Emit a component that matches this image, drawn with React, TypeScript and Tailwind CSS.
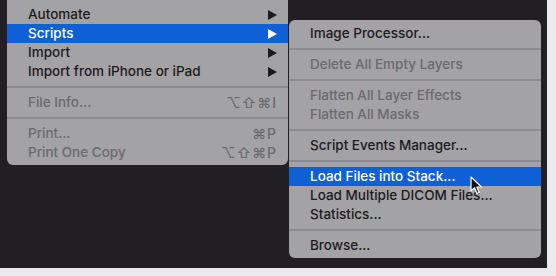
import React from 'react';

type Item =
  | { kind: 'sep' }
  | { kind: 'item'; label: string; shortcut?: string; disabled?: boolean; active?: boolean; sub?: boolean };

const mainItems: Item[] = [
  { kind: 'item', label: 'Automate', sub: true },
  { kind: 'item', label: 'Scripts', sub: true, active: true },
  { kind: 'item', label: 'Import', sub: true },
  { kind: 'item', label: 'Import from iPhone or iPad', sub: true },
  { kind: 'sep' },
  { kind: 'item', label: 'File Info...', shortcut: '⌥⇧⌘I', disabled: true },
  { kind: 'sep' },
  { kind: 'item', label: 'Print...', shortcut: '⌘P', disabled: true },
  { kind: 'item', label: 'Print One Copy', shortcut: '⌥⇧⌘P', disabled: true },
];

const scriptItems: Item[] = [
  { kind: 'item', label: 'Image Processor...' },
  { kind: 'sep' },
  { kind: 'item', label: 'Delete All Empty Layers', disabled: true },
  { kind: 'sep' },
  { kind: 'item', label: 'Flatten All Layer Effects', disabled: true },
  { kind: 'item', label: 'Flatten All Masks', disabled: true },
  { kind: 'sep' },
  { kind: 'item', label: 'Script Events Manager...' },
  { kind: 'sep' },
  { kind: 'item', label: 'Load Files into Stack...', active: true },
  { kind: 'item', label: 'Load Multiple DICOM Files...' },
  { kind: 'item', label: 'Statistics...' },
  { kind: 'sep' },
  { kind: 'item', label: 'Browse...' },
];

const Arrow = ({ white }: { white?: boolean }) => (
  <svg width="9" height="10" viewBox="0 0 9 10" className="shrink-0">
    <polygon points="0,0 9,5 0,10" fill={white ? '#ffffff' : '#1c1b1e'} />
  </svg>
);

const MenuRows = ({ items }: { items: Item[] }) => (
  <>
    {items.map((it, i) =>
      it.kind === 'sep' ? (
        <div key={i} className="h-[12px] flex items-center">
          <div className="h-[2px] w-full bg-[#8c8b8e]" />
        </div>
      ) : (
        <div
          key={i}
          className={`h-[19px] flex items-center justify-between pl-[21px] pr-[11px] ${
            it.active ? 'bg-[#0f5fd7] text-white' : it.disabled ? 'text-[#6b6a6e]' : 'text-[#1c1b1e]'
          }`}
        >
          <span>{it.label}</span>
          {it.sub && <Arrow white={it.active} />}
          {it.shortcut && <span className="text-[14px] tracking-[1px]">{it.shortcut}</span>}
        </div>
      )
    )}
  </>
);

const Cursor = () => (
  <svg width="13" height="19" viewBox="0 0 13 19" className="absolute left-[470px] top-[176px]">
    <path
      d="M1 1 L1 15 L4.5 11.8 L7 17.5 L9.2 16.5 L6.8 11 L11.5 11 Z"
      fill="#111"
      stroke="#fff"
      strokeWidth="1.2"
      strokeLinejoin="round"
    />
  </svg>
);

export default function App() {
  return (
    <div
      className="relative w-[556px] h-[276px] overflow-hidden bg-[#e9e9ee] text-[13.5px] font-medium"
      style={{ fontFamily: 'Inter, "Liberation Sans", sans-serif' }}
    >
      <div className="w-[547px] h-[268px] bg-[#211f24] pl-[7px]">
        <div className="w-[281px] bg-[#a3a2a5] rounded-b-[6px] pt-[5px] pb-[3px]">
          <MenuRows items={mainItems} />
        </div>
      </div>
      <div className="absolute left-[289px] top-[20px] w-[252px] bg-[#a3a2a5] rounded-[6px] pt-[4px] pb-[3px]">
        <MenuRows items={scriptItems} />
      </div>
      <Cursor />
    </div>
  );
}
